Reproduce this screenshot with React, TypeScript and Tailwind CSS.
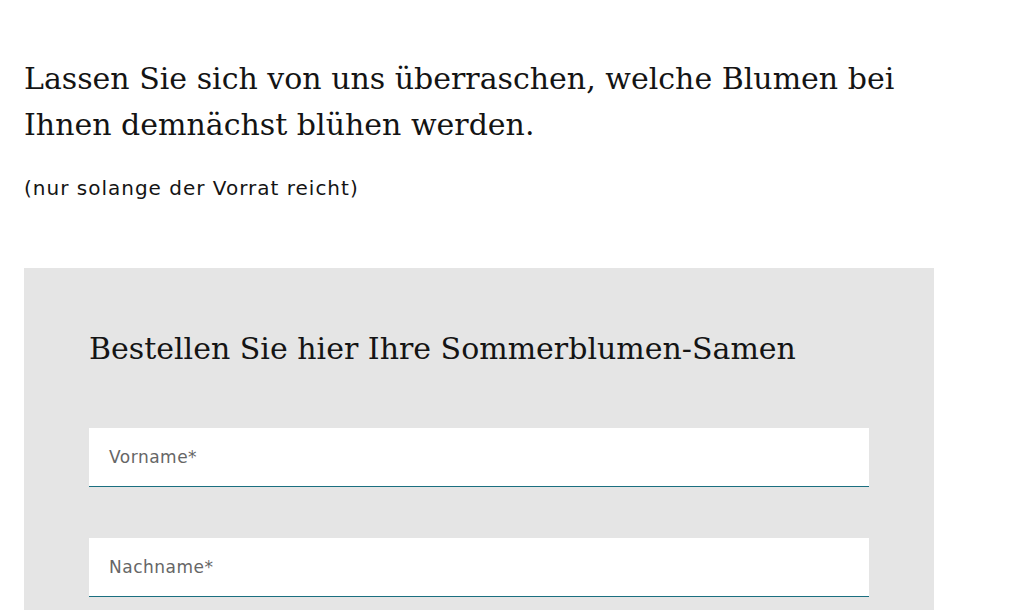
export default function App() {
  return (
    <div className="min-h-screen w-full bg-white overflow-hidden">
      <div className="pl-[24px] pt-[56px]">
        <h1 className="w-[900px] font-['DejaVu_Serif',serif] text-[30px] leading-[46px] font-normal text-[#141414]">
          Lassen Sie sich von uns überraschen, welche Blumen bei Ihnen demnächst blühen werden.
        </h1>
        <p className="mt-[26px] font-['DejaVu_Sans',sans-serif] text-[20px] leading-[28px] tracking-[1px] text-[#141414]">
          (nur solange der Vorrat reicht)
        </p>
        <div className="mt-[66px] w-[910px] bg-[#e5e5e5] px-[65px] pt-[59px] pb-[40px]">
          <h2 className="font-['DejaVu_Serif',serif] text-[30px] leading-[44px] font-normal text-[#141414]">
            Bestellen Sie hier Ihre Sommerblumen-Samen
          </h2>
          <div className="mt-[57px] flex flex-col gap-[51px]">
            <div className="flex h-[59px] w-[780px] items-center border-b border-[#1b6f80] bg-white pl-[20px] pt-[2px] font-['DejaVu_Sans',sans-serif] text-[17px] tracking-[0.5px] text-[#666666]">
              Vorname*
            </div>
            <div className="flex h-[59px] w-[780px] items-center border-b border-[#1b6f80] bg-white pl-[20px] pt-[2px] font-['DejaVu_Sans',sans-serif] text-[17px] tracking-[0.5px] text-[#666666]">
              Nachname*
            </div>
          </div>
        </div>
      </div>
    </div>
  );
}
